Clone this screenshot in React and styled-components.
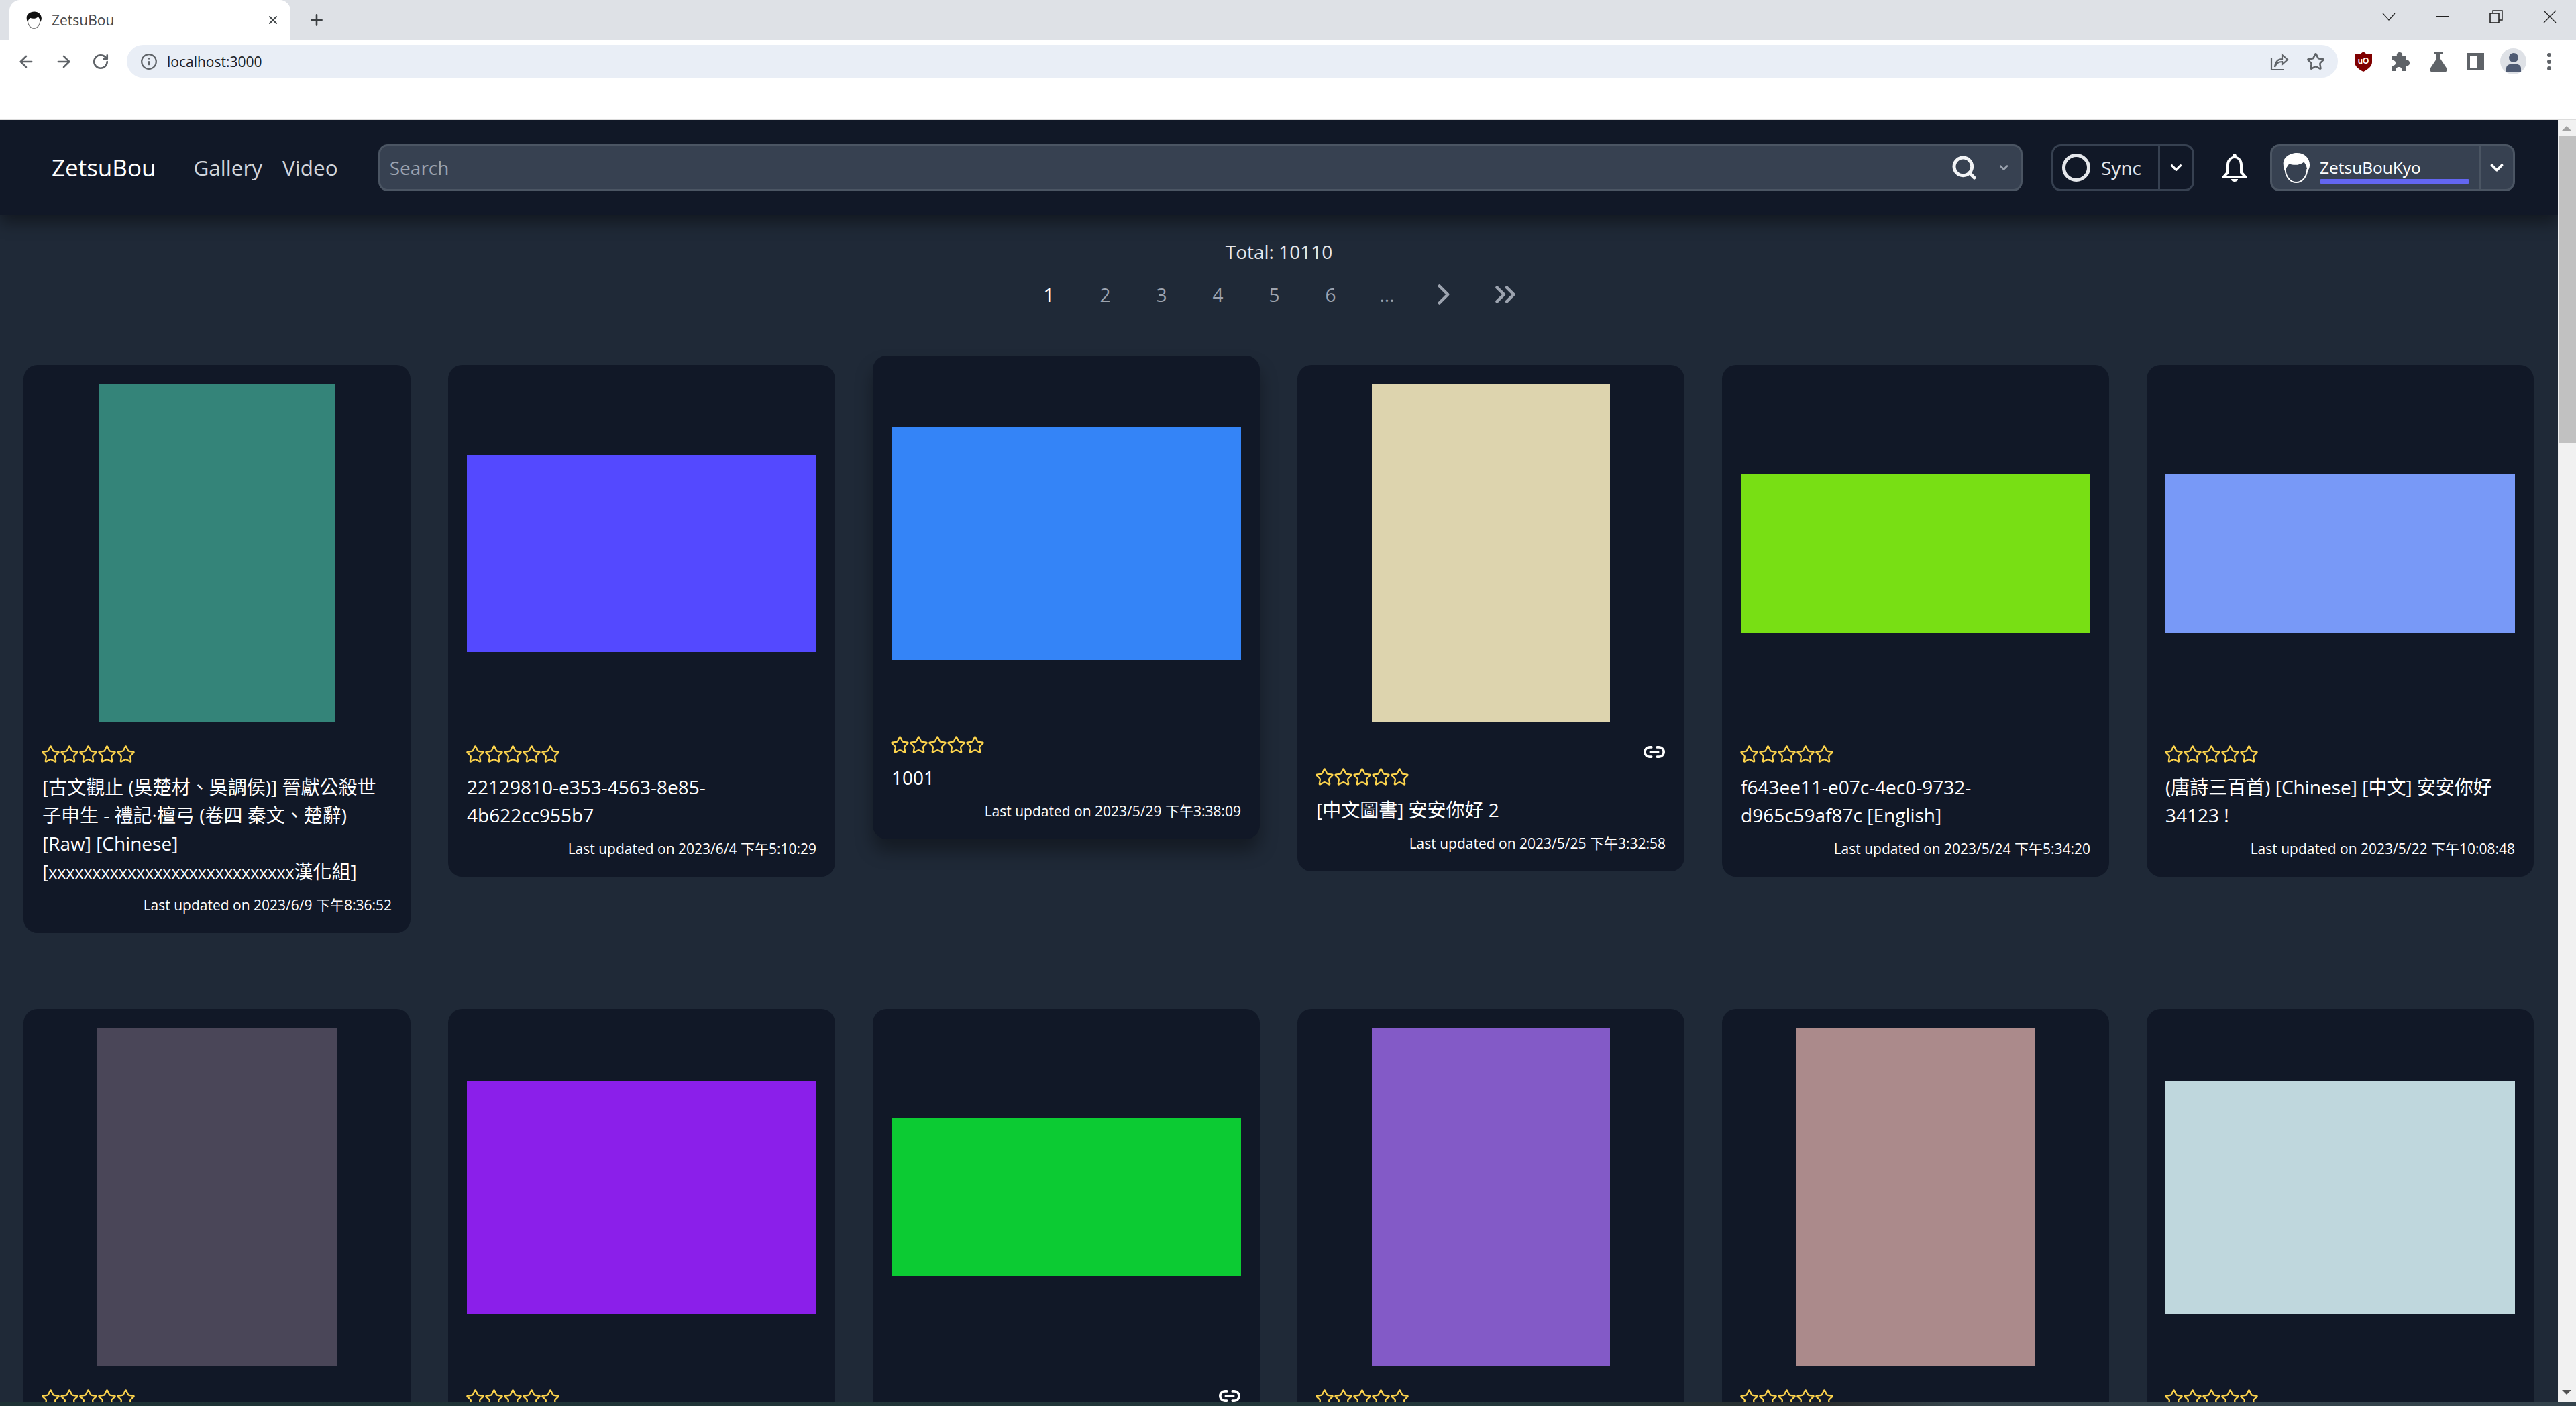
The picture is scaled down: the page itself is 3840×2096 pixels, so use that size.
import React from "react"
import styled, { createGlobalStyle } from "styled-components"
import { ArrowLeft, ArrowRight, ChevronDown, ChevronRight, ChevronsRight, Info, Link2, Plus, RotateCw, Search, Star, X } from "lucide-react"

const SANS = `"Open Sans", "Noto Sans CJK TC", sans-serif`

const Squeezed = styled.span`
  font-size: 25px;
  line-height: 1;
`

const firstRow = [
  {
    title: (
      <>
        [古文觀止 (吳楚材、吳調侯)] 晉獻公殺世子申生 - 禮記·檀弓 (卷四 秦文、楚辭) [Raw] [Chinese] [<Squeezed>xxxxxxxxxxxxxxxxxxxxxxxxxxxx</Squeezed>漢化組]
      </>
    ),
    date: "2023/6/9 下午8:36:52",
    color: "#348479",
    w: 353,
    h: 503,
  },
  { title: "22129810-e353-4563-8e85-4b622cc955b7", date: "2023/6/4 下午5:10:29", color: "#5449ff", w: 521, h: 294 },
  { title: "1001", date: "2023/5/29 下午3:38:09", color: "#3484f7", w: 521, h: 347, raised: true },
  { title: "[中文圖書] 安安你好 2", date: "2023/5/25 下午3:32:58", color: "#ddd4ae", w: 355, h: 503, link: true },
  { title: "f643ee11-e07c-4ec0-9732-d965c59af87c [English]", date: "2023/5/24 下午5:34:20", color: "#78df14", w: 521, h: 236 },
  { title: "(唐詩三百首) [Chinese] [中文] 安安你好 34123 !", date: "2023/5/22 下午10:08:48", color: "#7899f7", w: 521, h: 236 },
]

// the second row is cut off by the window below the stars
const secondRow = [
  { color: "#4a4658", w: 358, h: 503 },
  { color: "#8b1fea", w: 521, h: 348 },
  { color: "#0ccb33", w: 521, h: 235, link: true },
  { color: "#835ac7", w: 355, h: 503 },
  { color: "#ab8a8b", w: 357, h: 503 },
  { color: "#bfd7dd", w: 521, h: 348 },
]

const pages = ["1", "2", "3", "4", "5", "6", "..."]

const GlobalStyle = createGlobalStyle`
  html, body {
    margin: 0;
    padding: 0;
    background: #fff;
    overflow: hidden;
  }
  * {
    box-sizing: border-box;
  }
`

const HeadIcon = ({ size, hair, line }) => (
  <svg width={size} height={size} viewBox="0 0 48 48" fill="none">
    <path d="M8 26 C8 38 16 47 25 47 C34 47 42 38 42 26" stroke={line} strokeWidth="2" />
    <path d="M5 19 C4 8 15 1 26 1 C38 1 46 9 46 20 C46 24 44 28 42 30 C42 23 40 19 37 15 C31 20 22 21 14 18 C12 21 9 24 8 30 C6 27 5 23 5 19Z" fill={hair} />
  </svg>
)

const App = () => (
  <Page>
    <GlobalStyle />
    <TabStrip>
      <Tab>
        <HeadIcon size={26} hair="#111" line="#777" />
        <TabTitle>ZetsuBou</TabTitle>
        <TabClose><X size={20} strokeWidth={2.4} /></TabClose>
      </Tab>
      <NewTab><Plus size={26} strokeWidth={2.4} /></NewTab>
      <WindowControls>
        <WindowButton>
          <svg width="20" height="12" viewBox="0 0 20 12" fill="none"><path d="M1 1 L10 11 L19 1" stroke="#222" strokeWidth="1.2" /></svg>
        </WindowButton>
        <WindowButton>
          <svg width="18" height="2" viewBox="0 0 18 2"><rect width="18" height="2" fill="#222" /></svg>
        </WindowButton>
        <WindowButton>
          <svg width="20" height="20" viewBox="0 0 20 20" fill="none"><rect x="1" y="5" width="13" height="14" stroke="#222" strokeWidth="1.6" /><path d="M5 5 V1 H19 V15 H14" stroke="#222" strokeWidth="1.4" /></svg>
        </WindowButton>
        <WindowButton>
          <svg width="20" height="20" viewBox="0 0 20 20" fill="none"><path d="M1 1 L19 19 M19 1 L1 19" stroke="#222" strokeWidth="1.3" /></svg>
        </WindowButton>
      </WindowControls>
    </TabStrip>
    <Toolbar>
      <ToolButton><ArrowLeft size={28} strokeWidth={2.2} /></ToolButton>
      <ToolButton><ArrowRight size={28} strokeWidth={2.2} /></ToolButton>
      <ToolButton><RotateCw size={26} strokeWidth={2.4} /></ToolButton>
      <AddressBar>
        <Info size={26} strokeWidth={2} color="#5f6368" />
        <AddressText>localhost:3000</AddressText>
        <AddressActions>
          <svg width="28" height="28" viewBox="0 0 28 28" fill="none" stroke="#5f6368" strokeWidth="2.2">
            <path d="M2 9 V26 H20" />
            <path d="M7 22 C8 14 12 10 18 10 V4 L26 11 L18 18 V14 C13 14 9 17 7 22Z" />
          </svg>
          <Star size={28} strokeWidth={2.2} color="#5f6368" />
        </AddressActions>
      </AddressBar>
      <Extensions>
        <svg width="26" height="30" viewBox="0 0 26 30">
          <path d="M13 0 L17 3 L26 3 V16 C26 22 19 27 13 30 C7 27 0 22 0 16 V3 L9 3Z" fill="#800000" />
          <text x="13" y="18" textAnchor="middle" fontSize="12" fontFamily="Liberation Sans, sans-serif" fontWeight="700" fill="#fff">uO</text>
        </svg>
        <svg width="26" height="28" viewBox="0 0 26 28" fill="#5f6368">
          <path d="M0 6 H7 C6 1 9 0 11 0 C13 0 16 1 15 6 H20 V12 C25 11 26 14 26 16 C26 18 25 21 20 20 V28 H14 C15 24 13 22 10 22 C7 22 5 24 6 28 H0 V20 C4 20 5 18 5 16 C5 14 4 12 0 12Z" />
        </svg>
        <svg width="26" height="30" viewBox="0 0 26 30" fill="#5f6368">
          <rect x="7" y="0" width="12" height="3" />
          <path d="M10 3 H16 V11 L26 26 C27 28 25 30 23 30 H3 C1 30 -1 28 0 26 L10 11Z" />
        </svg>
        <svg width="25" height="26" viewBox="0 0 25 26" fill="#5f6368">
          <path fillRule="evenodd" d="M0 0 H25 V26 H0Z M4 4 V22 H15 V4Z" />
        </svg>
        <ProfileBubble>
          <svg width="24" height="28" viewBox="0 0 24 28" fill="#4f5b73">
            <circle cx="12" cy="7" r="7" />
            <path d="M1 28 V23 C1 18 6 16 12 16 C18 16 23 18 23 23 V28Z" />
          </svg>
        </ProfileBubble>
        <svg width="8" height="28" viewBox="0 0 8 28" fill="#5f6368">
          <circle cx="4" cy="4" r="3" />
          <circle cx="4" cy="14" r="3" />
          <circle cx="4" cy="24" r="3" />
        </svg>
      </Extensions>
    </Toolbar>
    <BlankBar />
    <Viewport>
      <Main>
        <NavBar>
          <Logo>ZetsuBou</Logo>
          <NavLinks>
            <NavLink>Gallery</NavLink>
            <NavLink>Video</NavLink>
          </NavLinks>
          <SearchBox>
            <SearchText>Search</SearchText>
            <Search size={40} strokeWidth={3} color="#f3f4f6" />
            <ChevronDown size={20} strokeWidth={3} color="#9ca3af" />
          </SearchBox>
          <SyncGroup>
            <SyncButton>
              <SyncRing />
              <span>Sync</span>
            </SyncButton>
            <SplitArrow $dark><ChevronDown size={26} strokeWidth={3} color="#fff" /></SplitArrow>
          </SyncGroup>
          <BellButton>
            <svg width="36" height="42" viewBox="0 0 36 42" fill="#fff">
              <path fillRule="evenodd" d="M18 0 C20 0 21 2 21 4 C27 6 30 11 30 17 V27 L36 34 V36 H0 V34 L6 27 V17 C6 11 9 6 15 4 C15 2 16 0 18 0Z M18 7 C13 7 10 12 10 17 V29 L6 33 H30 L26 29 V17 C26 12 23 7 18 7Z" />
              <path d="M13 38 H23 C23 41 20 42 18 42 C16 42 13 41 13 38Z" />
            </svg>
          </BellButton>
          <UserGroup>
            <UserButton>
              <HeadIcon size={46} hair="#fff" line="#fff" />
              <UserInfo>
                <UserName>ZetsuBouKyo</UserName>
                <UserBar />
              </UserInfo>
            </UserButton>
            <SplitArrow><ChevronDown size={30} strokeWidth={3} color="#fff" /></SplitArrow>
          </UserGroup>
        </NavBar>
        <Total>Total: 10110</Total>
        <Pagination>
          {pages.map((page, i) => (
            <PageItem key={page} $active={i === 0}>{page}</PageItem>
          ))}
          <PageItem><ChevronRight size={50} strokeWidth={2.2} /></PageItem>
          <PageItem $wide><ChevronsRight size={50} strokeWidth={2.2} /></PageItem>
        </Pagination>
        <Grid>
          {[...firstRow, ...secondRow].map((card) => (
            <Card key={card.color} $raised={card.raised}>
              <Cover><CoverFill $color={card.color} $w={card.w} $h={card.h} /></Cover>
              <Meta>
                {card.link && <LinkRow><Link2 size={34} strokeWidth={2.6} color="#fff" /></LinkRow>}
                <Stars>
                  {[0, 1, 2, 3, 4].map((n) => <Star key={n} size={29} strokeWidth={1.9} color="#fcd34d" />)}
                </Stars>
                {card.title && <Title>{card.title}</Title>}
                {card.date && <Updated>Last updated on {card.date}</Updated>}
              </Meta>
            </Card>
          ))}
        </Grid>
      </Main>
      <Scrollbar>
        <ScrollArrow />
        <ScrollThumb />
        <ScrollArrow $down />
      </Scrollbar>
    </Viewport>
    <BottomStrip />
  </Page>
)

const Page = styled.div`
  display: flex;
  flex-direction: column;
  width: 3840px;
  height: 2096px;
  overflow: hidden;
  font-family: ${SANS};
`

const TabStrip = styled.div`
  display: flex;
  align-items: flex-end;
  height: 60px;
  padding-left: 14px;
  background: #dee1e6;
  flex-shrink: 0;
`

const Tab = styled.div`
  display: flex;
  align-items: center;
  width: 419px;
  height: 60px;
  padding: 0 16px 0 23px;
  background: #fff;
  border-radius: 16px 16px 0 0;
`

const TabTitle = styled.span`
  margin-left: 14px;
  flex: 1;
  font-size: 21px;
  color: #45474a;
`

const TabClose = styled.span`
  display: flex;
  color: #3c4043;
`

const NewTab = styled.span`
  display: flex;
  align-self: center;
  margin-left: 26px;
  color: #3c4043;
`

const WindowControls = styled.div`
  display: flex;
  align-self: stretch;
  align-items: center;
  margin-left: auto;
  padding: 0 29px 10px 0;
  gap: 60px;
`

const WindowButton = styled.span`
  display: flex;
  width: 20px;
  justify-content: center;
`

const Toolbar = styled.div`
  display: flex;
  align-items: center;
  height: 60px;
  padding: 3px 22px 0 25px;
  background: #fff;
  flex-shrink: 0;
`

const ToolButton = styled.span`
  display: flex;
  width: 56px;
  color: #5f6368;
`

const AddressBar = styled.div`
  display: flex;
  align-items: center;
  width: 3296px;
  height: 49px;
  margin-left: -4px;
  padding: 0 19px 0 20px;
  background: #e9eef6;
  border-radius: 25px;
`

const AddressText = styled.span`
  margin-left: 14px;
  font-size: 21px;
  color: #202124;
`

const AddressActions = styled.div`
  display: flex;
  align-items: center;
  margin-left: auto;
  gap: 26px;
`

const Extensions = styled.div`
  display: flex;
  align-items: center;
  margin-left: 25px;
  gap: 30px;
`

const ProfileBubble = styled.span`
  display: flex;
  align-items: flex-end;
  justify-content: center;
  width: 39px;
  height: 39px;
  margin: 0 0 0 -6px;
  padding-bottom: 4px;
  background: #dee1e6;
  border-radius: 50%;
`

const BlankBar = styled.div`
  height: 59px;
  background: #fff;
  border-bottom: 1px solid #dcdcdc;
  flex-shrink: 0;
`

const Viewport = styled.div`
  display: flex;
  flex: 1;
  min-height: 0;
`

const Main = styled.main`
  flex: 1;
  min-width: 0;
  overflow: hidden;
  background: #1f2937;
  color: #fff;
`

const NavBar = styled.nav`
  position: relative;
  display: flex;
  align-items: center;
  height: 141px;
  padding: 0 64px 0 77px;
  background: #111827;
  box-shadow: 0 12px 22px rgba(0, 0, 0, 0.4);
`

const Logo = styled.span`
  font-size: 35px;
  color: #fff;
`

const NavLinks = styled.div`
  display: flex;
  margin: 0 60px 0 56px;
  gap: 30px;
`

const NavLink = styled.span`
  font-size: 31.5px;
  color: #d1d5db;
`

const SearchBox = styled.div`
  display: flex;
  flex: 1;
  align-items: center;
  height: 70px;
  padding: 0 15px 0 14px;
  background: #374151;
  border: 3.5px solid #4b5563;
  border-radius: 14px;
  gap: 29px;
`

const SearchText = styled.span`
  flex: 1;
  font-size: 28px;
  color: #9ca3af;
`

const SyncGroup = styled.div`
  display: flex;
  width: 213px;
  height: 70px;
  margin-left: 43px;
  border: 3.5px solid #374151;
  border-radius: 14px;
`

const SyncButton = styled.div`
  display: flex;
  flex: 1;
  align-items: center;
  padding-left: 13px;
  gap: 16px;
  font-size: 28px;
  color: #e5e7eb;
`

const SyncRing = styled.span`
  width: 42px;
  height: 42px;
  border: 5px solid #e5e7eb;
  border-radius: 50%;
`

const SplitArrow = styled.div`
  display: flex;
  align-items: center;
  justify-content: center;
  width: 51px;
  border-left: 3px solid ${(props) => (props.$dark ? "#374151" : "#4b5563")};
`

const BellButton = styled.span`
  display: flex;
  margin: 0 35px 0 42px;
`

const UserGroup = styled.div`
  display: flex;
  width: 365px;
  height: 70px;
  background: #374151;
  border: 3.5px solid #4b5563;
  border-radius: 14px;
`

const UserButton = styled.div`
  display: flex;
  flex: 1;
  align-items: center;
  padding-left: 12px;
  gap: 13px;
`

const UserInfo = styled.div`
  display: flex;
  flex: 1;
  flex-direction: column;
  padding: 10px 14px 0 0;
`

const UserName = styled.span`
  font-size: 24.5px;
  line-height: 28px;
  color: #fff;
`

const UserBar = styled.span`
  height: 7px;
  margin-top: 3px;
  background: #6366f1;
  border-radius: 2px;
`

const Total = styled.div`
  margin-top: 34px;
  font-size: 28px;
  line-height: 42px;
  text-align: center;
  color: #e5e7eb;
`

const Pagination = styled.div`
  display: flex;
  justify-content: center;
  height: 42px;
  margin-top: 22px;
  padding-left: 2px;
`

const PageItem = styled.span`
  display: flex;
  align-items: center;
  justify-content: center;
  width: ${(props) => (props.$wide ? "100px" : "84px")};
  font-size: 28px;
  color: ${(props) => (props.$active ? "#fff" : "#9ca3af")};
`

const Grid = styled.div`
  display: grid;
  grid-template-columns: repeat(6, 577px);
  column-gap: 56px;
  row-gap: 113px;
  align-items: start;
  margin-top: 84px;
  padding-left: 35px;
`

const Card = styled.article`
  padding: 29px 28px 28px;
  background: #111827;
  border-radius: 21px;
  ${(props) => props.$raised && `
    transform: translateY(-14px);
    box-shadow: 0 18px 26px rgba(0, 0, 0, 0.35);
  `}
`

const Cover = styled.div`
  display: flex;
  align-items: center;
  justify-content: center;
  height: 503px;
`

const CoverFill = styled.div`
  width: ${(props) => props.$w}px;
  height: ${(props) => props.$h}px;
  background: ${(props) => props.$color};
`

const Meta = styled.div`
  padding-top: 28px;
`

const LinkRow = styled.div`
  display: flex;
  align-items: center;
  justify-content: flex-end;
  height: 34px;
`

const Stars = styled.div`
  display: flex;
  align-items: center;
  height: 28px;
  margin: 6px 0 14px -2px;

  svg {
    margin-right: -1px;
  }
`

const Title = styled.div`
  font-size: 28px;
  line-height: 42px;
  color: #fff;
`

const Updated = styled.div`
  margin-top: 15px;
  font-size: 21px;
  line-height: 28px;
  text-align: right;
  color: #fff;
`

const Scrollbar = styled.div`
  display: flex;
  flex-direction: column;
  width: 27px;
  background: #f1f1f1;
  flex-shrink: 0;
`

const ScrollArrow = styled.span`
  width: 14px;
  height: 7px;
  margin: ${(props) => (props.$down ? "auto 0 11px 6px" : "9px 0 8px 6px")};
  background: ${(props) => (props.$down ? "#505050" : "#a3a3a3")};
  clip-path: ${(props) => (props.$down ? "polygon(0 0, 100% 0, 50% 100%)" : "polygon(50% 0, 100% 100%, 0 100%)")};
`

const ScrollThumb = styled.span`
  height: 458px;
  margin-left: 2px;
  background: #c1c1c1;
`

const BottomStrip = styled.div`
  height: 6px;
  flex-shrink: 0;
  background: linear-gradient(90deg, #1e3235 0%, #24383b 60%, #2a2d2e 71%, #37464d 76%, #34434c 100%);
`

export default App
